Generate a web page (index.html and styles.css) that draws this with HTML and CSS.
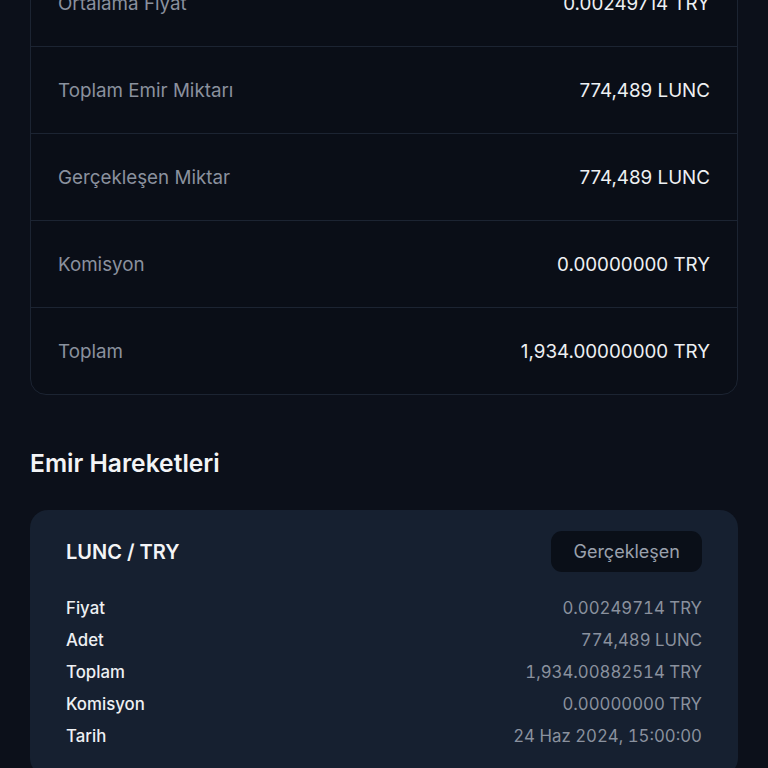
FILE: index.html
```html
<!DOCTYPE html>
<html lang="tr">
<head>
<meta charset="utf-8">
<link rel="stylesheet" href="styles.css">
</head>
<body>
<main class="page">
  <section class="summary">
    <div class="row"><span class="label">Ortalama Fiyat</span><span class="value">0.00249714 TRY</span></div>
    <div class="row"><span class="label">Toplam Emir Miktarı</span><span class="value">774,489 LUNC</span></div>
    <div class="row"><span class="label">Gerçekleşen Miktar</span><span class="value">774,489 LUNC</span></div>
    <div class="row"><span class="label">Komisyon</span><span class="value">0.00000000 TRY</span></div>
    <div class="row"><span class="label">Toplam</span><span class="value">1,934.00000000 TRY</span></div>
  </section>

  <h2 class="section-title">Emir Hareketleri</h2>

  <section class="trade">
    <div class="trade-head">
      <span class="pair">LUNC / TRY</span>
      <span class="badge">Gerçekleşen</span>
    </div>
    <div class="trade-rows">
      <div class="trow"><span class="tl">Fiyat</span><span class="tv">0.00249714 TRY</span></div>
      <div class="trow"><span class="tl">Adet</span><span class="tv">774,489 LUNC</span></div>
      <div class="trow"><span class="tl">Toplam</span><span class="tv">1,934.00882514 TRY</span></div>
      <div class="trow"><span class="tl">Komisyon</span><span class="tv">0.00000000 TRY</span></div>
      <div class="trow"><span class="tl">Tarih</span><span class="tv">24 Haz 2024, 15:00:00</span></div>
    </div>
  </section>
</main>
</body>
</html>
```

FILE: styles.css
```css
html, body {
  margin: 0;
  padding: 0;
  background: #0c101a;
  font-family: Inter, "Noto Sans", "Liberation Sans", sans-serif;
  -webkit-font-smoothing: antialiased;
}

.page {
  margin-top: -41px;
  padding: 0 30px;
  display: flex;
  flex-direction: column;
}

.summary {
  background: #0a0e17;
  border: 1px solid #1c2432;
  border-radius: 16px;
  display: flex;
  flex-direction: column;
}

.row {
  height: 86px;
  padding: 0 27px;
  display: flex;
  align-items: center;
  justify-content: space-between;
  font-size: 18.8px;
  border-top: 1px solid #1c2432;
}

.row:first-child {
  border-top: none;
}

.label {
  color: #8a919e;
}

.value {
  color: #eef0f3;
}

.section-title {
  margin: 54px 0 33px;
  font-size: 24.6px;
  line-height: 28px;
  font-weight: 600;
  color: #f3f4f6;
}

.trade {
  background: #162030;
  border-radius: 18px;
  padding: 21px 36px 24px;
  display: flex;
  flex-direction: column;
}

.trade-head {
  display: flex;
  align-items: center;
  justify-content: space-between;
}

.pair {
  font-size: 20px;
  font-weight: 600;
  color: #f3f4f6;
}

.badge {
  background: #0a0f18;
  border-radius: 11px;
  height: 41px;
  padding: 0 22px;
  display: flex;
  align-items: center;
  font-size: 18px;
  color: #9aa1ad;
}

.trade-rows {
  margin-top: 20px;
  display: flex;
  flex-direction: column;
}

.trow {
  height: 32px;
  display: flex;
  align-items: center;
  justify-content: space-between;
  font-size: 16.8px;
}

.tl {
  color: #eef0f3;
  font-weight: 500;
}

.tv {
  color: #8a919e;
  font-variant-numeric: tabular-nums;
}
```
